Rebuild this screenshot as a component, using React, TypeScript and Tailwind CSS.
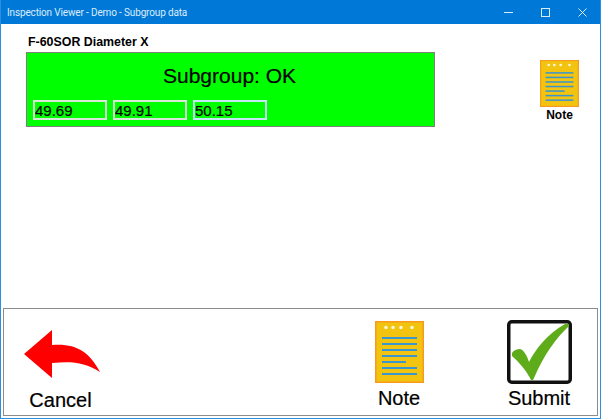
import React from 'react';

const NoteIcon = ({ className }: { className: string }) => (
  <svg viewBox="0 0 49 62" className={className} preserveAspectRatio="none">
    <rect x="0.75" y="0.75" width="47.5" height="60.5" fill="#f2c40f" stroke="#f79a1e" strokeWidth="1.5" />
    {[11, 18, 26, 37].map((x) => (
      <circle key={x} cx={x} cy="6.5" r="1.7" fill="#fff8dc" />
    ))}
    {[16, 22, 28, 34, 46, 52].map((y) => (
      <rect key={y} x="7" y={y} width="35" height="2" fill="#3b96cf" />
    ))}
    <rect x="7" y="40" width="24" height="2" fill="#3b96cf" />
  </svg>
);

const ValueBox = ({ value, focused }: { value: string; focused?: boolean }) => (
  <div
    className={`w-[74px] h-[20px] border-2 flex items-center text-[15px] leading-none text-black [-webkit-text-stroke:0.2px_black] ${
      focused ? 'border-[#c5e8f5]' : 'border-[#d8e8d8]'
    }`}
  >
    {value}
  </div>
);

const App = () => {
  return (
    <div className="w-[601px] h-[419px] flex flex-col bg-white overflow-hidden font-['Liberation_Sans',Arial,sans-serif] border-x border-b border-[#2b8fdd]">
      {/* Title bar */}
      <div className="h-[24px] -mx-px shrink-0 bg-[#0078d7] flex items-center justify-between text-white">
        <span className="pl-[7px] text-[10px] tracking-[-0.15px] font-['Roboto',sans-serif] text-[#dcecf9]">Inspection Viewer - Demo - Subgroup data</span>
        <div className="flex items-center">
          <div className="w-[37px] h-[24px] flex items-center justify-center">
            <svg width="9" height="9" viewBox="0 0 9 9"><path d="M0 4.5H9" stroke="#dcecf9" strokeWidth="1" /></svg>
          </div>
          <div className="w-[37px] h-[24px] flex items-center justify-center">
            <svg width="9" height="9" viewBox="0 0 9 9"><rect x="0.5" y="0.5" width="8" height="8" fill="none" stroke="#dcecf9" strokeWidth="1" /></svg>
          </div>
          <div className="w-[37px] h-[24px] flex items-center justify-center">
            <svg width="9" height="9" viewBox="0 0 9 9"><path d="M0.5 0.5L8.5 8.5M8.5 0.5L0.5 8.5" stroke="#dcecf9" strokeWidth="1" /></svg>
          </div>
        </div>
      </div>

      {/* Main area */}
      <div className="flex-1 flex justify-between pl-[25px] pr-[21px]">
        <div className="flex flex-col">
          <div className="h-[28px] pl-[2px] pt-[11px] text-[12.4px] leading-[14px] font-bold text-black">F-60SOR Diameter X</div>
          <div className="w-[409px] h-[75px] bg-[#00ff00] border border-[#7f7f7f] flex flex-col">
            <div className="pt-[11px] h-[47px] pl-[136px] text-[21px] leading-[24px] text-black [-webkit-text-stroke:0.2px_black]">Subgroup: OK</div>
            <div className="flex gap-[6px] pl-[6px]">
              <ValueBox value="49.69" />
              <ValueBox value="49.91" />
              <ValueBox value="50.15" focused />
            </div>
          </div>
        </div>
        <div className="flex flex-col items-center pt-[36px]">
          <NoteIcon className="w-[39px] h-[47px]" />
          <span className="mt-[1px] text-[12px] leading-[14px] font-bold text-black">Note</span>
        </div>
      </div>

      {/* Bottom button panel */}
      <div className="h-[108px] mx-[2px] mb-[2px] border border-[#8c8c8c] flex justify-between shrink-0">
        <div className="w-[113px] flex flex-col items-center pt-[20px]">
          <svg width="78" height="50" viewBox="0 0 78 50" className="ml-[3px]">
            <path d="M1 25L29 1V16C52 14 66 22 77 43C62 33 48 32 29 34V49Z" fill="#ff0000" />
          </svg>
          <span className="mt-[9px] text-[20px] leading-[24px] text-black [-webkit-text-stroke:0.2px_black]">Cancel</span>
        </div>
        <div className="flex pr-[25px]">
          <div className="w-[66px] mr-[74px] flex flex-col items-center pt-[12px]">
            <NoteIcon className="w-[49px] h-[62px]" />
            <span className="mt-[3px] text-[20px] leading-[24px] text-black [-webkit-text-stroke:0.2px_black]">Note</span>
          </div>
          <div className="w-[66px] flex flex-col items-center pt-[11px]">
            <svg width="65" height="64" viewBox="0 0 65 64">
              <rect x="1.75" y="1.75" width="61.5" height="60.5" rx="3" fill="#fff" stroke="#111" strokeWidth="3.5" />
              <path d="M5 33C7 30 10 29 13 29C17 30 20 36 22 42C28 30 40 14 58 4C62 3 63 5 61 7C50 17 36 36 27 58C26 61 24 61 23 58C18 49 12 42 5 36Z" fill="#5fac1a" />
            </svg>
            <span className="mt-[2px] text-[20px] leading-[24px] text-black [-webkit-text-stroke:0.2px_black]">Submit</span>
          </div>
        </div>
      </div>
    </div>
  );
};

export default App;
